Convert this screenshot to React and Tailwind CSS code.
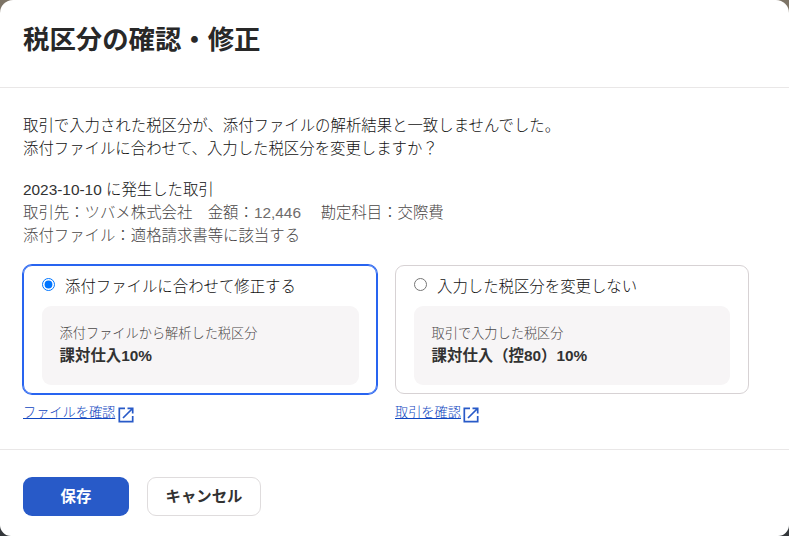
import React, { useState } from "react";

const options = [
    {
        id: "file",
        label: "添付ファイルに合わせて修正する",
        caption: "添付ファイルから解析した税区分",
        value: "課対仕入10%",
        link: "ファイルを確認",
    },
    {
        id: "deal",
        label: "入力した税区分を変更しない",
        caption: "取引で入力した税区分",
        value: "課対仕入（控80）10%",
        link: "取引を確認",
    },
];

const ExternalIcon = () => (
    <svg
        className="ml-[2.5px] mt-1 shrink-0 text-[#285ac8]"
        width="16"
        height="16"
        viewBox="0 0 16 16"
        fill="none"
        stroke="currentColor"
        strokeWidth="1.7"
    >
        <path d="M7 1.3H1.3v13.4h13.4V9" />
        <path d="M9.5 1.3h5.2v5.2M14.5 1.5L5 11" />
    </svg>
);

const OptionCard = ({ option, checked, onChange }) => (
    <div className="w-[354px]">
        <label
            className={
                "block h-[129px] rounded-[9px] border pl-[18px] pt-2 " +
                (checked
                    ? "border-[#2864f0] pr-[17px] ring-1 ring-[#2864f0]"
                    : "border-[#d7d2d4] pr-[18px]")
            }
        >
            <span className="flex h-8 items-start">
                <input
                    type="radio"
                    name="tax"
                    className="mt-1 h-[13px] w-[13px] shrink-0"
                    checked={checked}
                    onChange={() => onChange(option.id)}
                />
                <span className="ml-2.5 mt-px">{option.label}</span>
            </span>
            <span className="block h-[79px] rounded-[9px] bg-[#f7f5f6] px-[17.6px] pt-[18px]">
                <span className="block text-[13.2px] leading-[20px] text-[#4a4747]">
                    {option.caption}
                </span>
                <span className="block font-bold leading-[23px] text-[#323232]">
                    {option.value}
                </span>
            </span>
        </label>
        <a
            href="#"
            className="mt-[9px] flex h-[22px] items-start text-[13.2px] leading-[20px] text-[#0f46c0]"
        >
            <span className="underline">{option.link}</span>
            <ExternalIcon />
        </a>
    </div>
);

const App = () => {
    const [selected, setSelected] = useState("file");

    return (
        <div className="bg-gradient-to-b from-[#7d7466] to-[#33373a]">
            <div className="flex h-[536px] flex-col rounded-t-[13px] rounded-b-[11px] bg-white font-['Liberation_Sans','Noto_Sans_CJK_JP',sans-serif] text-[15.4px] leading-[23.1px] text-[#111111]">
                <header className="h-[88px] border-b border-[#e9e7e7] pl-[23px] pt-[21px]">
                    <h1 className="text-[26.4px] font-bold leading-[39px] text-[#282828]">
                        税区分の確認・修正
                    </h1>
                </header>
                <main className="h-[361px] pl-[23px] pt-[26px]">
                    <p className="font-light">
                        取引で入力された税区分が、添付ファイルの解析結果と一致しませんでした。
                        <br />
                        添付ファイルに合わせて、入力した税区分を変更しますか？
                    </p>
                    <div className="mt-[18px] font-light">
                        <p>
                            <span className="text-[#323232]">2023-10-10</span>{" "}
                            に発生した取引
                        </p>
                        <p className="text-[#4a4747]">
                            取引先：ツバメ株式会社　金額：
                            <span className="text-[#6e6b6b]">12,446</span>
                            {" 　"}勘定科目：交際費
                        </p>
                        <p className="text-[#4a4747]">
                            添付ファイル：適格請求書等に該当する
                        </p>
                    </div>
                    <div className="mt-[17.5px] flex gap-[18px] font-light">
                        {options.map((option) => (
                            <OptionCard
                                key={option.id}
                                option={option}
                                checked={selected === option.id}
                                onChange={setSelected}
                            />
                        ))}
                    </div>
                </main>
                <footer className="flex flex-1 gap-[18px] border-t border-[#e9e7e7] pl-[23px] pt-[27px] font-bold text-[#323232]">
                    <button className="h-[39px] w-[106px] rounded-[9px] bg-[#285ac8] text-white">
                        保存
                    </button>
                    <button className="h-[39px] w-[114px] rounded-[9px] border border-[#dfdcdd] bg-white">
                        キャンセル
                    </button>
                </footer>
            </div>
        </div>
    );
};

export default App;
